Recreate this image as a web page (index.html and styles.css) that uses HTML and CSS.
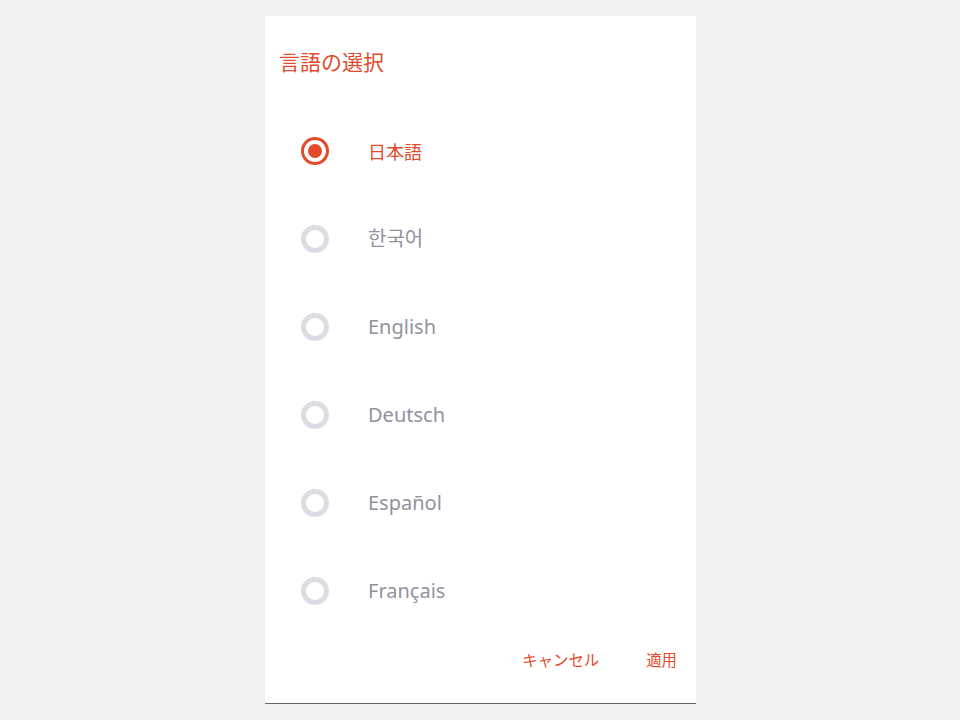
FILE: index.html
```html
<!DOCTYPE html>
<html lang="ja">
<head>
<meta charset="utf-8">
<link rel="stylesheet" href="styles.css">
</head>
<body>
<div class="dialog">
  <h1 class="title">言語の選択</h1>
  <ul class="options">
    <li class="option checked"><span class="radio"></span><span class="label">日本語</span></li>
    <li class="option"><span class="radio"></span><span class="label">한국어</span></li>
    <li class="option"><span class="radio"></span><span class="label">English</span></li>
    <li class="option"><span class="radio"></span><span class="label">Deutsch</span></li>
    <li class="option"><span class="radio"></span><span class="label">Español</span></li>
    <li class="option"><span class="radio"></span><span class="label">Français</span></li>
  </ul>
  <div class="actions">
    <span class="btn">キャンセル</span>
    <span class="btn">適用</span>
  </div>
</div>
</body>
</html>
```
FILE: styles.css
```css
html, body {
  margin: 0;
  padding: 0;
  background: #f1f1f1;
  height: 100%;
}
body {
  font-family: "Noto Sans", "Noto Sans CJK JP", "Noto Sans CJK KR", sans-serif;
  display: flex;
  justify-content: center;
  padding-top: 16px;
  box-sizing: border-box;
}
.dialog {
  width: 431px;
  height: 688px;
  margin-left: 1px;
  background: #ffffff;
  border-bottom: 1px solid #666666;
  box-sizing: border-box;
  display: flex;
  flex-direction: column;
}
.title {
  margin: 0;
  padding: 30px 0 0 14px;
  height: 30px;
  line-height: 30px;
  font-size: 21px;
  font-weight: 400;
  color: #e14b2c;
  font-family: "Noto Sans CJK JP", sans-serif;
}
.options {
  list-style: none;
  margin: 46px 0 0 0;
  padding: 0;
}
.option {
  height: 88px;
  display: flex;
  align-items: center;
  padding-left: 36px;
}
.option:first-child {
  margin-top: -15px;
}
.radio {
  width: 28px;
  height: 28px;
  box-sizing: border-box;
  border-radius: 50%;
  border: 5px solid #dcdce2;
  display: flex;
  align-items: center;
  justify-content: center;
}
.checked .radio {
  border: 3px solid #e14b2c;
}
.checked .radio::after {
  content: "";
  width: 14px;
  height: 14px;
  border-radius: 50%;
  background: #e14b2c;
}
.label {
  margin-left: 39px;
  font-size: 20px;
  color: #9292a0;
  line-height: 28px;
}
.checked .label {
  color: #e14b2c;
  font-family: "Noto Sans CJK JP", sans-serif;
  font-size: 18px;
}
.actions {
  display: flex;
  justify-content: flex-end;
  gap: 47px;
  padding-right: 19px;
  margin-top: 12px;
}
.btn {
  font-family: "Noto Sans CJK JP", sans-serif;
  font-size: 15.4px;
  color: #e14b2c;
  line-height: 24px;
}
```
